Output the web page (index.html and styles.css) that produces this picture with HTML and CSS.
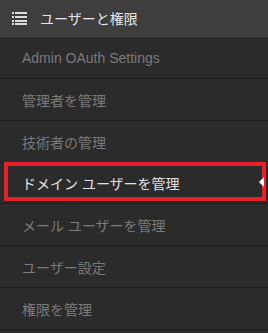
FILE: index.html
```html
<!DOCTYPE html>
<html lang="ja">
<head>
  <meta charset="UTF-8" />
  <title>ユーザーと権限</title>
  <link rel="stylesheet" href="styles.css">
</head>
<body>

<div class="menu">
  <div class="menu-titulo">
    <svg class="icono" width="15" height="13" viewBox="0 0 15 13">
      <rect x="0" y="0" width="2" height="2" />
      <rect x="3" y="0" width="12" height="2" />
      <rect x="0" y="4" width="2" height="2" />
      <rect x="3" y="4" width="12" height="2" />
      <rect x="0" y="8" width="2" height="2" />
      <rect x="3" y="8" width="12" height="2" />
      <rect x="0" y="11" width="2" height="2" />
      <rect x="3" y="11" width="12" height="2" />
    </svg>
    <span>ユーザーと権限</span>
  </div>

  <ul class="lista">
    <li><a href="#">Admin OAuth Settings</a></li>
    <li><a href="#">管理者を管理</a></li>
    <li><a href="#">技術者の管理</a></li>
    <li class="activo"><a href="#">ドメイン ユーザーを管理</a></li>
    <li><a href="#">メール ユーザーを管理</a></li>
    <li><a href="#">ユーザー設定</a></li>
    <li><a href="#">権限を管理</a></li>
  </ul>
</div>

</body>
</html>
```

FILE: styles.css
```css
body {
  margin: 0;
  background: #2b2b2b;
  font-family: "Liberation Sans", "Noto Sans CJK JP", sans-serif;
  font-size: 14px;
}

.menu {
  width: 268px;
  height: 333px;
  overflow: hidden;
  background: #2b2b2b;
}

.menu-titulo {
  height: 36px;
  display: flex;
  align-items: center;
  padding-left: 12px;
  background: #3e3e3e;
  border-bottom: 1px solid #464646;
  color: #e6e6e6;
  font-size: 14px;
}

.icono {
  fill: #dcdcdc;
  margin-right: 13px;
  margin-top: 1px;
}

.lista {
  list-style: none;
  margin: 0;
  padding: 0;
}

.lista li {
  position: relative;
  height: 41px;
  border-bottom: 1px solid #1e1e1e;
}

.lista a {
  display: flex;
  align-items: center;
  height: 100%;
  padding-left: 22px;
  color: #7a7a7a;
  text-decoration: none;
}

.lista .activo a {
  color: #e2e2e2;
  margin-top: -1px;
}

/* recuadro rojo y flecha del elemento activo */
.lista .activo::before {
  content: "";
  position: absolute;
  left: 4px;
  right: 2px;
  top: 0;
  height: 31px;
  border: 4px solid #e8202a;
  pointer-events: none;
}

.lista .activo::after {
  content: "";
  position: absolute;
  right: 4px;
  top: 15px;
  border-top: 5px solid transparent;
  border-bottom: 5px solid transparent;
  border-right: 5px solid #ffffff;
}
```
